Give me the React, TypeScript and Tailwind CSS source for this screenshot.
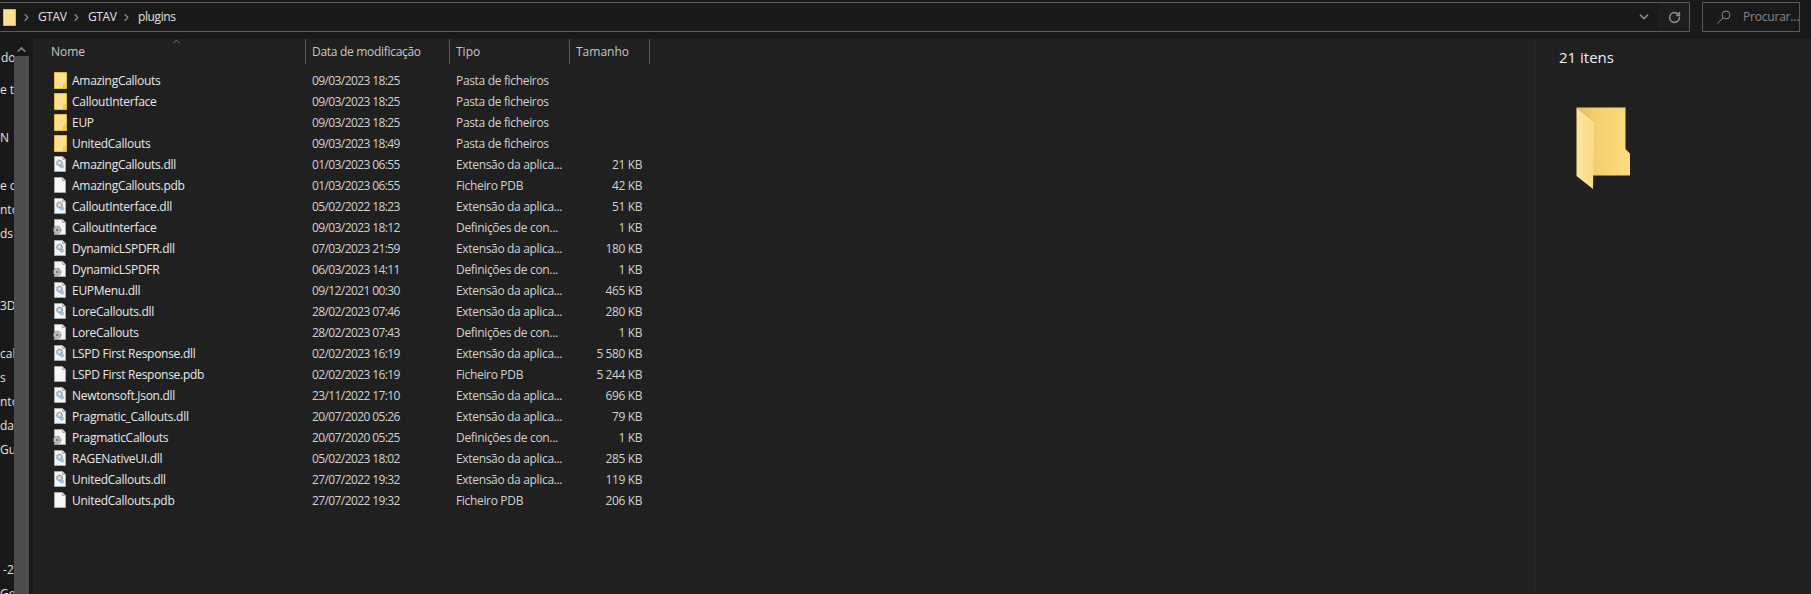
import { ChevronDown, ChevronRight, ChevronUp, RotateCw } from "lucide-react";

type Kind = "folder" | "dll" | "pdb" | "cfg";

interface FileRow {
  name: string;
  date: string;
  type: string;
  size: string;
  kind: Kind;
}

const EXT = "Extensão da aplica...";
const PDB = "Ficheiro PDB";
const CFG = "Definições de con...";
const DIR = "Pasta de ficheiros";

const files: FileRow[] = [
  { name: "AmazingCallouts", date: "09/03/2023 18:25", type: DIR, size: "", kind: "folder" },
  { name: "CalloutInterface", date: "09/03/2023 18:25", type: DIR, size: "", kind: "folder" },
  { name: "EUP", date: "09/03/2023 18:25", type: DIR, size: "", kind: "folder" },
  { name: "UnitedCallouts", date: "09/03/2023 18:49", type: DIR, size: "", kind: "folder" },
  { name: "AmazingCallouts.dll", date: "01/03/2023 06:55", type: EXT, size: "21 KB", kind: "dll" },
  { name: "AmazingCallouts.pdb", date: "01/03/2023 06:55", type: PDB, size: "42 KB", kind: "pdb" },
  { name: "CalloutInterface.dll", date: "05/02/2022 18:23", type: EXT, size: "51 KB", kind: "dll" },
  { name: "CalloutInterface", date: "09/03/2023 18:12", type: CFG, size: "1 KB", kind: "cfg" },
  { name: "DynamicLSPDFR.dll", date: "07/03/2023 21:59", type: EXT, size: "180 KB", kind: "dll" },
  { name: "DynamicLSPDFR", date: "06/03/2023 14:11", type: CFG, size: "1 KB", kind: "cfg" },
  { name: "EUPMenu.dll", date: "09/12/2021 00:30", type: EXT, size: "465 KB", kind: "dll" },
  { name: "LoreCallouts.dll", date: "28/02/2023 07:46", type: EXT, size: "280 KB", kind: "dll" },
  { name: "LoreCallouts", date: "28/02/2023 07:43", type: CFG, size: "1 KB", kind: "cfg" },
  { name: "LSPD First Response.dll", date: "02/02/2023 16:19", type: EXT, size: "5 580 KB", kind: "dll" },
  { name: "LSPD First Response.pdb", date: "02/02/2023 16:19", type: PDB, size: "5 244 KB", kind: "pdb" },
  { name: "Newtonsoft.Json.dll", date: "23/11/2022 17:10", type: EXT, size: "696 KB", kind: "dll" },
  { name: "Pragmatic_Callouts.dll", date: "20/07/2020 05:26", type: EXT, size: "79 KB", kind: "dll" },
  { name: "PragmaticCallouts", date: "20/07/2020 05:25", type: CFG, size: "1 KB", kind: "cfg" },
  { name: "RAGENativeUI.dll", date: "05/02/2023 18:02", type: EXT, size: "285 KB", kind: "dll" },
  { name: "UnitedCallouts.dll", date: "27/07/2022 19:32", type: EXT, size: "119 KB", kind: "dll" },
  { name: "UnitedCallouts.pdb", date: "27/07/2022 19:32", type: PDB, size: "206 KB", kind: "pdb" },
];

// clipped start of the nav tree labels, one per 24px row
const navRows = ["e t", "", "N", "", "e c", "nto", "ds", "", "", "3D", "", "cal", "s", "nto", "da", "Gu", "", "", "", "", "\u00a0-2", "Ge"];

const SmallFolder = () => (
  <svg width="13" height="17" viewBox="0 0 13 17" className="shrink-0">
    <path d="M0.5 0.5H12.5V16.5H0.5Z" fill="#ffe08e" stroke="#e8b93f" />
    <path d="M9.5 16V12.5L12 10.5V16Z" fill="#f5cd5f" stroke="#e8b93f" strokeWidth="0.6" />
  </svg>
);

const FileIcon = ({ kind }: { kind: Kind }) => {
  if (kind === "folder") return <SmallFolder />;
  return (
    <svg width="16" height="17" viewBox="0 0 16 17" className="ml-[-2px] mr-[-1px] shrink-0">
      <path d="M2.5 0.5H10.5L13.5 3.5V15.5H2.5Z" fill="#f4f6f8" stroke="#a8a8a8" />
      <path d="M10.5 0.5V3.5H13.5" fill="#dedede" stroke="#a8a8a8" />
      {kind === "dll" && (
        <>
          <circle cx="7.5" cy="7" r="2.9" fill="#c4c7ca" stroke="#75797d" strokeDasharray="1.3 0.7" />
          <circle cx="7.5" cy="7" r="1" fill="#f0f1f2" />
          <circle cx="10" cy="10.5" r="1.6" fill="#a9cdee" stroke="#5f9bd0" strokeWidth="0.6" />
        </>
      )}
      {kind === "cfg" && (
        <>
          <circle cx="5.2" cy="11" r="3.7" fill="#bdbfc1" stroke="#75787a" strokeDasharray="1.6 0.8" />
          <circle cx="5.2" cy="11" r="1.3" fill="#74777a" />
        </>
      )}
    </svg>
  );
};

const LargeFolder = () => (
  <svg width="56" height="84" viewBox="0 0 56 84" className="block">
    <defs>
      <linearGradient id="back" x1="0" x2="1" y1="0" y2="0">
        <stop offset="0" stopColor="#e8c062" />
        <stop offset="0.4" stopColor="#f3d06e" />
        <stop offset="1" stopColor="#fcdc7e" />
      </linearGradient>
      <linearGradient id="flap" x1="0" x2="1" y1="0" y2="0">
        <stop offset="0" stopColor="#ffe49c" />
        <stop offset="1" stopColor="#fbdc88" />
      </linearGradient>
    </defs>
    <path d="M0.5 0.5H49.5V42L54 46.5V68.5H17V14Z" fill="url(#back)" />
    <path d="M0.5 0.5L18 14.5L17 82L0.5 69Z" fill="url(#flap)" />
  </svg>
);

const HeaderCell = ({ label, className }: { label: string; className: string }) => (
  <div className={`flex h-[25px] items-center border-r border-[#5c5c5c] pl-[6px] pt-[1px] ${className}`}>{label}</div>
);

const Crumb = ({ label, className }: { label: string; className: string }) => (
  <div className={`flex items-center ${className}`}>
    <ChevronRight size={11} strokeWidth={3.5} className="shrink-0 text-[#7d7d7d]" />
    <span className="ml-[6px] tracking-[-0.4px] text-[#e2e2e2]">{label}</span>
  </div>
);

const App = () => {
  return (
    <div className="flex h-[594px] w-[1811px] flex-col overflow-hidden bg-[#202020] text-[12px] text-[#dcdcdc] [font-family:'Open_Sans','Noto_Sans',sans-serif]">
      {/* Address bar */}
      <div className="flex h-[39px] shrink-0 gap-3 bg-[#191919] pt-[2px]">
        <div className="flex h-[30px] w-[1690px] items-center border-y border-r border-[#5a5a5a] bg-[#191919]">
          <div className="ml-[3px] mr-[5px]">
            <svg width="13" height="17" viewBox="0 0 13 17" className="block">
              <path d="M0.5 0.5H12.5V16.5H0.5Z" fill="#ffe08e" stroke="#e8b93f" />
            </svg>
          </div>
          <Crumb label="GTAV" className="w-[50px]" />
          <Crumb label="GTAV" className="w-[50px]" />
          <Crumb label="plugins" className="" />
          <div className="ml-auto flex h-full items-center">
            <ChevronDown size={14} strokeWidth={3} className="mr-[8px] text-[#8c8c8c]" />
            <div className="flex h-full w-[30px] items-center justify-center bg-[#1d1d1d]">
              <RotateCw size={13} strokeWidth={3} className="text-[#8c8c8c]" />
            </div>
          </div>
        </div>
        <div className="flex h-[30px] w-[98px] items-center border border-[#5a5a5a] pl-[14px] text-[#858585]">
          <svg width="14" height="14" viewBox="0 0 14 14" fill="none" stroke="#858585" className="shrink-0">
            <circle cx="9" cy="5" r="4" />
            <path d="M6 8L0.5 13.5" />
          </svg>
          <span className="ml-[12px] whitespace-nowrap tracking-[-0.2px]">Procurar...</span>
        </div>
      </div>

      <div className="flex min-h-0 flex-1">
        {/* Nav pane, clipped by the window */}
        <div className="flex w-[14px] shrink-0 flex-col overflow-hidden whitespace-nowrap bg-[#191919] pt-[10px] text-[#e0e0e0]">
          <div className="h-6 shrink-0 pl-[1px]">do</div>
          <div className="h-2 shrink-0" />
          {navRows.map((label, i) => (
            <div key={i} className="h-6 shrink-0">{label}</div>
          ))}
        </div>
        {/* Nav scrollbar */}
        <div className="flex w-[15px] shrink-0 flex-col bg-[#171717]">
          <ChevronUp size={13} strokeWidth={3} className="mx-auto mt-[4px] h-[13px] text-[#7a7a7a]" />
          <div className="flex-1 bg-[#4d4d4d]" />
        </div>
        <div className="w-[4px] shrink-0 bg-[#191919]" />

        {/* File list */}
        <div className="relative w-[1501px] shrink-0">
          <ChevronUp size={11} strokeWidth={1.5} className="absolute left-[138px] top-[-3px] text-[#a0a0a0]" />
          <div className="flex text-[#c8c8c8]">
            <HeaderCell label="Nome" className="w-[273px] pl-[18px]" />
            <HeaderCell label="Data de modificação" className="w-[144px] tracking-[-0.3px]" />
            <HeaderCell label="Tipo" className="w-[120px]" />
            <HeaderCell label="Tamanho" className="w-[80px]" />
          </div>
          <div className="mt-[6px] flex flex-col">
            {files.map((file, i) => (
              <div key={i} className="flex h-[21px] items-center">
                <div className="flex w-[273px] items-center pl-[21px]">
                  <FileIcon kind={file.kind} />
                  <span className="ml-[5px] tracking-[-0.28px] text-[#e8e8e8]">{file.name}</span>
                </div>
                <div className="w-[144px] pl-[6px] tracking-[-0.6px] text-[#d2d2d2]">{file.date}</div>
                <div className="w-[120px] pl-[6px] tracking-[-0.33px] text-[#d2d2d2]">{file.type}</div>
                <div className="w-[72px] text-right tracking-[-0.4px] text-[#d2d2d2]">{file.size}</div>
              </div>
            ))}
          </div>
        </div>

        {/* Details pane */}
        <div className="flex-1 border-l border-[#2b2b2b] pl-[24px] pt-[8px]">
          <div className="text-[15px] leading-5 text-[#f0f0f0]">21 itens</div>
          <div className="ml-[17px] mt-[40px]">
            <LargeFolder />
          </div>
        </div>
      </div>
    </div>
  );
};

export default App;
